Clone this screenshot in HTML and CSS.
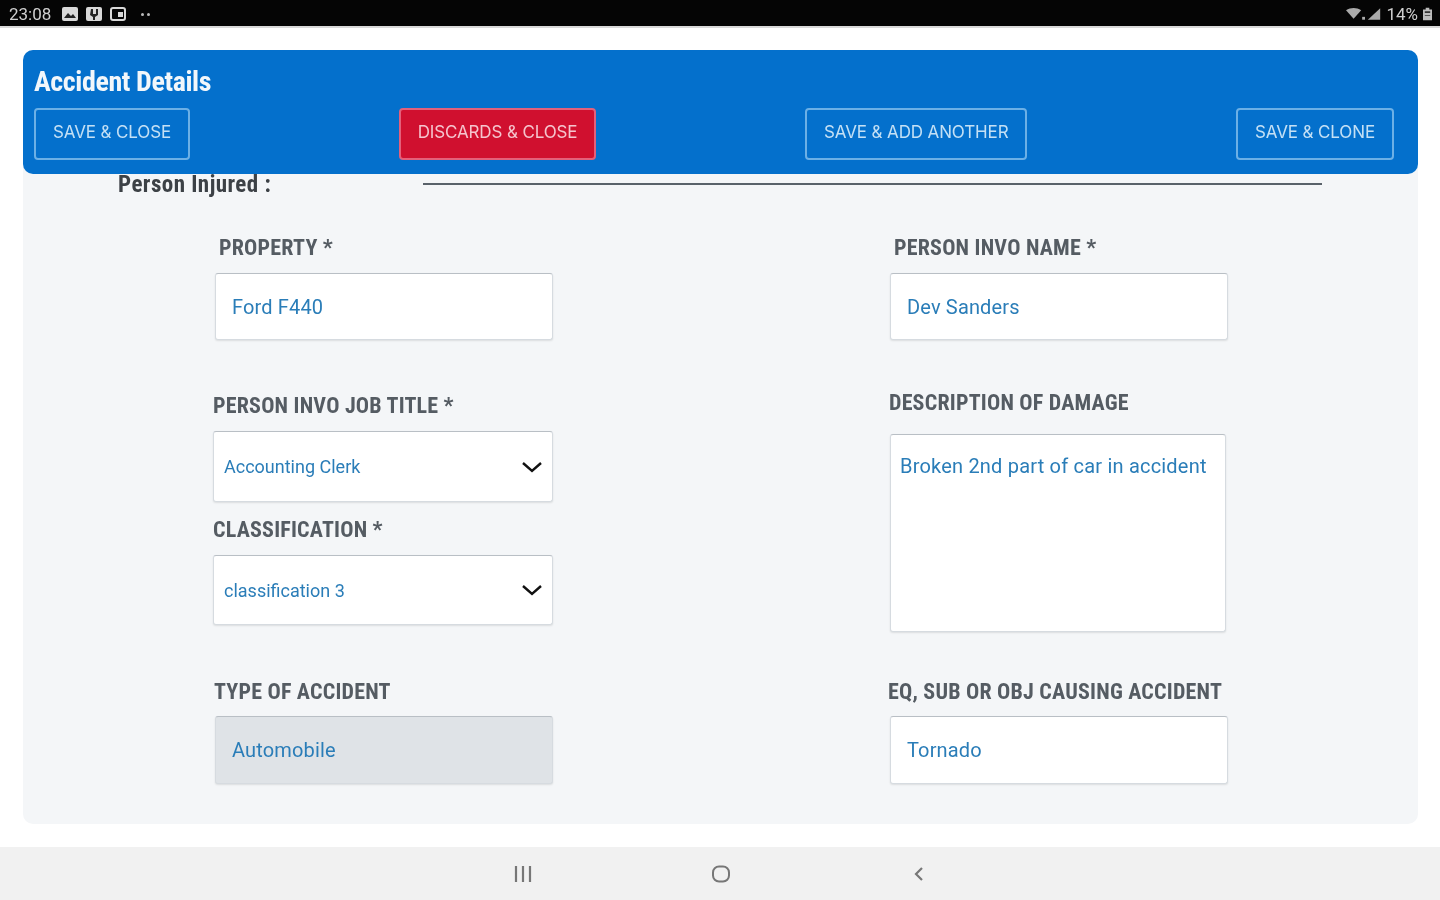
FILE: index.html
```html
<!DOCTYPE html>
<html lang="en">
  <head>
    <meta charset="UTF-8" />
    <title>Accident Details</title>
    <link rel="stylesheet" href="styles.css">
  </head>
  <body>
    <div class="screen">
      <div class="status-bar">
        <div class="status-left">
          <span class="clock">23:08</span>
          <svg class="status-icon" viewBox="0 0 16 16"><rect x="0" y="1" width="16" height="14" rx="2" fill="#d8d8d8"/><path d="M2 12l4-5 3 3 2-2 3 4z" fill="#222"/></svg>
          <svg class="status-icon" viewBox="0 0 16 16"><rect x="0" y="1" width="16" height="14" rx="2" fill="#d8d8d8"/><path d="M5 3h2v5h3V3h2v6l-3 2v3H7v-3L4 9z" fill="#222"/></svg>
          <svg class="status-icon" viewBox="0 0 16 16"><rect x="1" y="2" width="14" height="12" rx="2" fill="none" stroke="#d8d8d8" stroke-width="2"/><rect x="8" y="6" width="5" height="5" fill="#d8d8d8"/></svg>
          <span class="status-dots"><i></i><i></i></span>
        </div>
        <div class="status-right">
          <svg class="signal" viewBox="0 0 40 14"><path d="M0 3c5-3 11-3 16 0l-8 9z" fill="#aaa"/><path d="M17 10h3v3h-3z" fill="#aaa"/><path d="M23 13L36 1v12z" fill="#aaa"/></svg>
          <span>14%</span>
          <svg class="battery" viewBox="0 0 10 14"><path d="M3 0h4v2h3v12H0V2h3z" fill="#bbb"/><path d="M2 4h6v2H2zM2 8h6v1H2z" fill="#333"/></svg>
        </div>
      </div>

      <main class="content">
        <div class="card">
          <div class="card-header">
            <h1>Accident Details</h1>
            <div class="actions">
              <button class="btn">SAVE &amp; CLOSE</button>
              <button class="btn btn-danger">DISCARDS &amp; CLOSE</button>
              <button class="btn">SAVE &amp; ADD ANOTHER</button>
              <button class="btn">SAVE &amp; CLONE</button>
            </div>
          </div>

          <div class="section-title">
            <span>Person Injured :</span>
            <div class="section-line"></div>
          </div>

          <div class="form">
            <div class="col">
              <label class="label label-first indent-6">PROPERTY *</label>
              <input class="input" value="Ford F440" readonly>

              <label class="label label-job">PERSON INVO JOB TITLE *</label>
              <div class="select select-job"><span>Accounting Clerk</span>
                <svg class="chevron" viewBox="0 0 22 14"><path d="M2 3l9 8 9-8" fill="none" stroke="#111" stroke-width="2.4"/></svg>
              </div>

              <label class="label label-class">CLASSIFICATION *</label>
              <div class="select"><span>classification 3</span>
                <svg class="chevron" viewBox="0 0 22 14"><path d="M2 3l9 8 9-8" fill="none" stroke="#111" stroke-width="2.4"/></svg>
              </div>

              <label class="label label-type">TYPE OF ACCIDENT</label>
              <input class="input input-last input-disabled" value="Automobile" readonly>
            </div>

            <div class="col">
              <label class="label label-first indent-6">PERSON INVO NAME *</label>
              <input class="input" value="Dev Sanders" readonly>

              <label class="label label-desc">DESCRIPTION OF DAMAGE</label>
              <textarea class="textarea" readonly>Broken 2nd part of car in accident</textarea>

              <label class="label label-eq">EQ, SUB OR OBJ CAUSING ACCIDENT</label>
              <input class="input input-last" value="Tornado" readonly>
            </div>
          </div>
        </div>
      </main>

      <div class="nav-bar">
        <svg class="nav-icon" viewBox="0 0 20 20"><path d="M3 2v16M10 2v16M17 2v16" stroke="#777" stroke-width="2.2" fill="none"/></svg>
        <svg class="nav-icon" viewBox="0 0 20 20"><rect x="2" y="2.5" width="16" height="15" rx="6" fill="none" stroke="#777" stroke-width="2"/></svg>
        <svg class="nav-icon" viewBox="0 0 20 20"><path d="M13 4l-6 6 6 6" fill="none" stroke="#777" stroke-width="2.2"/></svg>
      </div>
    </div>
  </body>
</html>
```

FILE: styles.css
```css
* {
  box-sizing: border-box;
}
body {
  margin: 0;
  font-family: Roboto, "Liberation Sans", sans-serif;
  background: #fff;
}
.screen {
  width: 1440px;
  height: 900px;
  display: flex;
  flex-direction: column;
  overflow: hidden;
  filter: blur(0.7px);
}

/* status bar */
.status-bar {
  height: 28px;
  flex: none;
  background: #050505;
  border-bottom: 2px solid #d9d9d9;
  color: #cfcfcf;
  display: flex;
  justify-content: space-between;
  align-items: center;
  padding: 2px 8px 0 9px;
  font-size: 17px;
}
.status-left,
.status-right {
  display: flex;
  align-items: center;
}
.clock {
  width: 53px;
}
.status-icon {
  width: 16px;
  height: 16px;
  margin-right: 8px;
}
.status-dots {
  display: flex;
  gap: 3px;
  margin-left: 7px;
}
.status-dots i {
  width: 3px;
  height: 3px;
  border-radius: 50%;
  background: #bbb;
}
.signal {
  width: 38px;
  height: 14px;
  margin-right: 2px;
}
.battery {
  width: 9px;
  height: 14px;
  margin-left: 5px;
}

/* card */
.content {
  flex: 1;
  padding: 22px 22px 23px 23px;
}
.card {
  background: #f4f6f8;
  border-radius: 10px;
  height: 774px;
}
.card-header {
  height: 124px;
  background: #0470cc;
  border-radius: 10px;
  padding: 15px 24px 0 11px;
}
.card-header h1 {
  margin: 0 0 10px;
  height: 33px;
  color: #f2f7fb;
  font-size: 28px;
  line-height: 33px;
  font-weight: 700;
  font-stretch: 75%;
  letter-spacing: -0.4px;
}
.actions {
  display: flex;
  justify-content: space-between;
}
.btn {
  height: 52px;
  padding: 0 17px 5px;
  background: transparent;
  border: 2px solid #6cb0e6;
  border-radius: 4px;
  color: #c4e0f5;
  font-family: Inter, sans-serif;
  font-size: 17px;
  letter-spacing: -0.13px;
  white-space: nowrap;
}
.btn-danger {
  background: #d0102f;
  border-color: #e4607a;
  color: #f5c4cd;
}

/* section heading */
.section-title {
  height: 20px;
  padding: 0 96px 0 95px;
  display: flex;
  align-items: center;
  color: #3c4146;
  font-size: 23px;
  line-height: 22px;
  font-weight: 700;
  font-stretch: 75%;
  letter-spacing: 0.45px;
}
.section-title span {
  width: 305px;
  flex: none;
  padding-top: 1px;
}
.section-line {
  flex: 1;
  height: 2px;
  background: #59626a;
}

/* form */
.form {
  display: flex;
  gap: 335px;
  padding: 42px 0 0 190px;
}
.col {
  width: 340px;
  display: flex;
  flex-direction: column;
}
.label {
  height: 22px;
  line-height: 23px;
  color: #555c63;
  font-size: 22px;
  font-weight: 700;
  font-stretch: 75%;
  letter-spacing: 0.2px;
  white-space: nowrap;
}
.label-first {
  margin-bottom: 15px;
}
.indent-6 {
  padding-left: 6px;
}
.label-job {
  margin: 54px 0 15px;
}
.label-class {
  margin: 16px 0 15px;
}
.label-type {
  margin: 55px 0 14px 1px;
}
.label-desc {
  margin: 51px 0 21px 1px;
}
.label-eq {
  margin: 48px 0 14px;
}
.input,
.textarea,
.select {
  display: block;
  background: #fff;
  border: 1px solid #d6dbe0;
  border-top-color: #b9bfc5;
  border-radius: 3px;
  box-shadow: 0 1px 2px rgba(0, 0, 0, 0.1);
  color: #2a7db8;
  font-family: Roboto, sans-serif;
  outline: none;
}
.input {
  width: 338px;
  height: 67px;
  margin-left: 2px;
  padding: 0 16px;
  font-size: 20px;
  letter-spacing: 0.15px;
}
.input-last {
  height: 68px;
}
.input-disabled {
  background: #dfe3e7;
}
.select {
  height: 70px;
  padding: 0 9px 0 10px;
  display: flex;
  justify-content: space-between;
  align-items: center;
  font-size: 18px;
}
.select-job {
  height: 71px;
}
.chevron {
  width: 22px;
  height: 14px;
}
.textarea {
  width: 336px;
  height: 198px;
  margin-left: 2px;
  padding: 19px 9px;
  font-size: 20px;
  line-height: 24px;
  letter-spacing: 0.2px;
  resize: none;
}

/* android nav */
.nav-bar {
  height: 53px;
  flex: none;
  background: #f1f1f1;
  display: flex;
  justify-content: center;
  align-items: center;
  gap: 178px;
  padding-left: 2px;
}
.nav-icon {
  width: 20px;
  height: 20px;
}
```
